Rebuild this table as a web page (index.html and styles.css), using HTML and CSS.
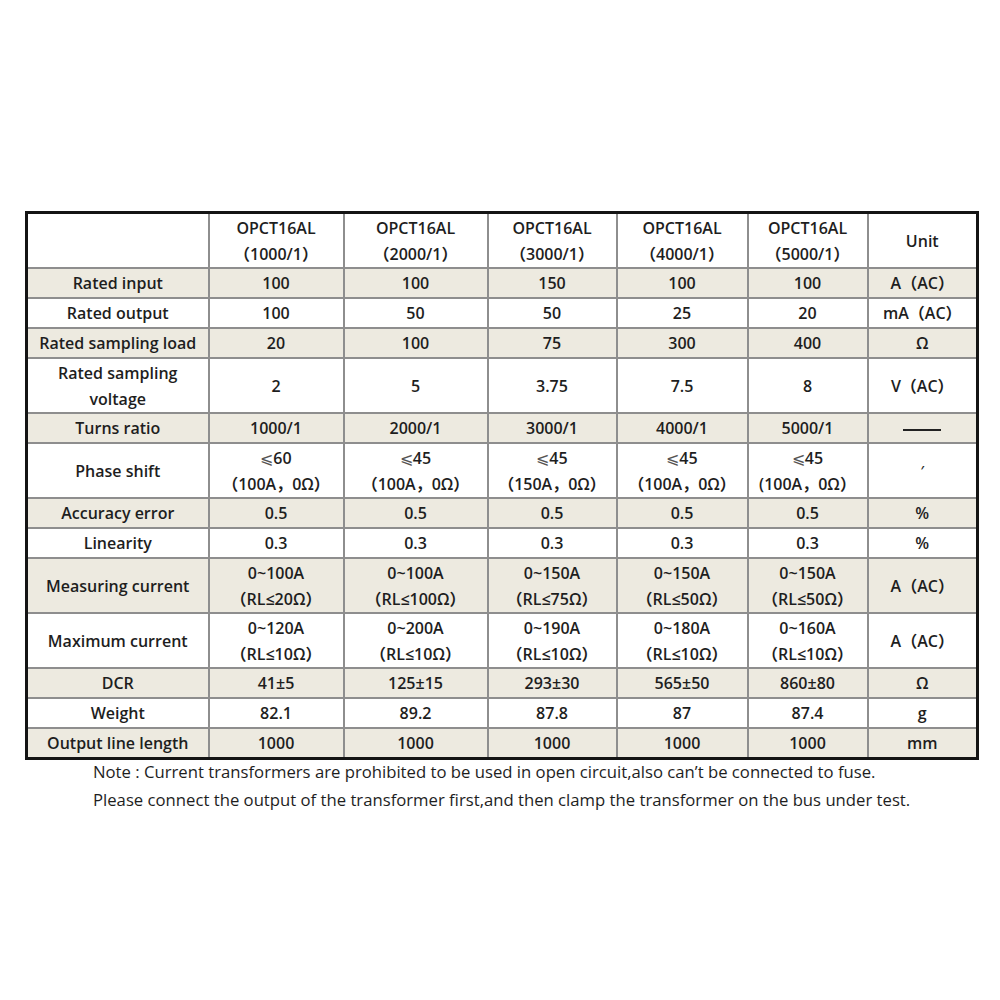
FILE: index.html
```html
<!DOCTYPE html>
<html>
<head>
<meta charset="utf-8">
<link rel="stylesheet" href="styles.css">
</head>
<body>
<div class="page">
  <table class="spec">
    <colgroup>
      <col class="c0"><col class="c1"><col class="c2"><col class="c3"><col class="c4"><col class="c5"><col class="c6">
    </colgroup>
    <tr class="hdr">
      <td></td>
      <td>OPCT16AL<br>（1000/1）</td>
      <td>OPCT16AL<br>（2000/1）</td>
      <td>OPCT16AL<br>（3000/1）</td>
      <td>OPCT16AL<br>（4000/1）</td>
      <td>OPCT16AL<br>（5000/1）</td>
      <td>Unit</td>
    </tr>
    <tr class="sh"><td>Rated input</td><td>100</td><td>100</td><td>150</td><td>100</td><td>100</td><td>A（AC）</td></tr>
    <tr><td>Rated output</td><td>100</td><td>50</td><td>50</td><td>25</td><td>20</td><td>mA（AC）</td></tr>
    <tr class="sh"><td>Rated sampling load</td><td>20</td><td>100</td><td>75</td><td>300</td><td>400</td><td>Ω</td></tr>
    <tr class="dbl"><td>Rated sampling<br>voltage</td><td>2</td><td>5</td><td>3.75</td><td>7.5</td><td>8</td><td>V（AC）</td></tr>
    <tr class="sh"><td>Turns ratio</td><td>1000/1</td><td>2000/1</td><td>3000/1</td><td>4000/1</td><td>5000/1</td><td><span class="dash"></span></td></tr>
    <tr class="dbl"><td>Phase shift</td><td><span class="le">⩽</span>60<br>（100A，0Ω）</td><td><span class="le">⩽</span>45<br>（100A，0Ω）</td><td><span class="le">⩽</span>45<br>（150A，0Ω）</td><td><span class="le">⩽</span>45<br>（100A，0Ω）</td><td><span class="le">⩽</span>45<br>(100A，0Ω）</td><td class="prime">′</td></tr>
    <tr class="sh"><td>Accuracy error</td><td>0.5</td><td>0.5</td><td>0.5</td><td>0.5</td><td>0.5</td><td>%</td></tr>
    <tr><td>Linearity</td><td>0.3</td><td>0.3</td><td>0.3</td><td>0.3</td><td>0.3</td><td>%</td></tr>
    <tr class="sh dbl"><td>Measuring current</td><td>0~100A<br>（RL≤20Ω）</td><td>0~100A<br>（RL≤100Ω）</td><td>0~150A<br>（RL≤75Ω）</td><td>0~150A<br>（RL≤50Ω）</td><td>0~150A<br>（RL≤50Ω）</td><td>A（AC）</td></tr>
    <tr class="dbl"><td>Maximum current</td><td>0~120A<br>（RL≤10Ω）</td><td>0~200A<br>（RL≤10Ω）</td><td>0~190A<br>（RL≤10Ω）</td><td>0~180A<br>（RL≤10Ω）</td><td>0~160A<br>（RL≤10Ω）</td><td>A（AC）</td></tr>
    <tr class="sh"><td>DCR</td><td>41±5</td><td>125±15</td><td>293±30</td><td>565±50</td><td>860±80</td><td>Ω</td></tr>
    <tr><td>Weight</td><td>82.1</td><td>89.2</td><td>87.8</td><td>87</td><td>87.4</td><td>g</td></tr>
    <tr class="sh"><td>Output line length</td><td>1000</td><td>1000</td><td>1000</td><td>1000</td><td>1000</td><td>mm</td></tr>
  </table>
  <div class="note">
    <p>Note : Current transformers are prohibited to be used in open circuit,also can’t be connected to fuse.</p>
    <p>Please connect the output of the transformer first,and then clamp the transformer on the bus under test.</p>
  </div>
</div>
</body>
</html>
```
FILE: styles.css
```css
html, body {
  margin: 0;
  padding: 0;
  background: #fff;
}
.page {
  padding: 211px 0 0 25px;
  font-family: "Open Sans", "Noto Sans CJK SC", sans-serif;
  color: #1e1e1e;
}
.spec {
  border-collapse: collapse;
  table-layout: fixed;
  width: 951px;
  border: 3px solid #141414;
  font-size: 16px;
  font-weight: 600;
}
.c0 { width: 182px; }
.c1 { width: 135px; }
.c2 { width: 144px; }
.c3 { width: 129px; }
.c4 { width: 131px; }
.c5 { width: 120px; }
.c6 { width: 110px; }
.spec td {
  border: 2px solid #8e8e8e;
  text-align: center;
  vertical-align: middle;
  padding: 0;
  height: 28px;
  line-height: 26px;
}
.spec tr.hdr td { height: 53px; }
.spec tr.dbl td { height: 53px; }
.spec tr.sh td { background: #edeae0; }
.le {
  font-weight: 300;
  color: #555;
}
.dash {
  display: inline-block;
  width: 38px;
  height: 2px;
  background: #222;
  vertical-align: middle;
}
.prime { font-size: 14px; }
.note {
  margin-top: -2px;
  padding-left: 93px;
  margin-left: -25px;
  font-size: 16.7px;
  font-weight: 500;
  line-height: 28px;
}
.note p { margin: 0; }
```
